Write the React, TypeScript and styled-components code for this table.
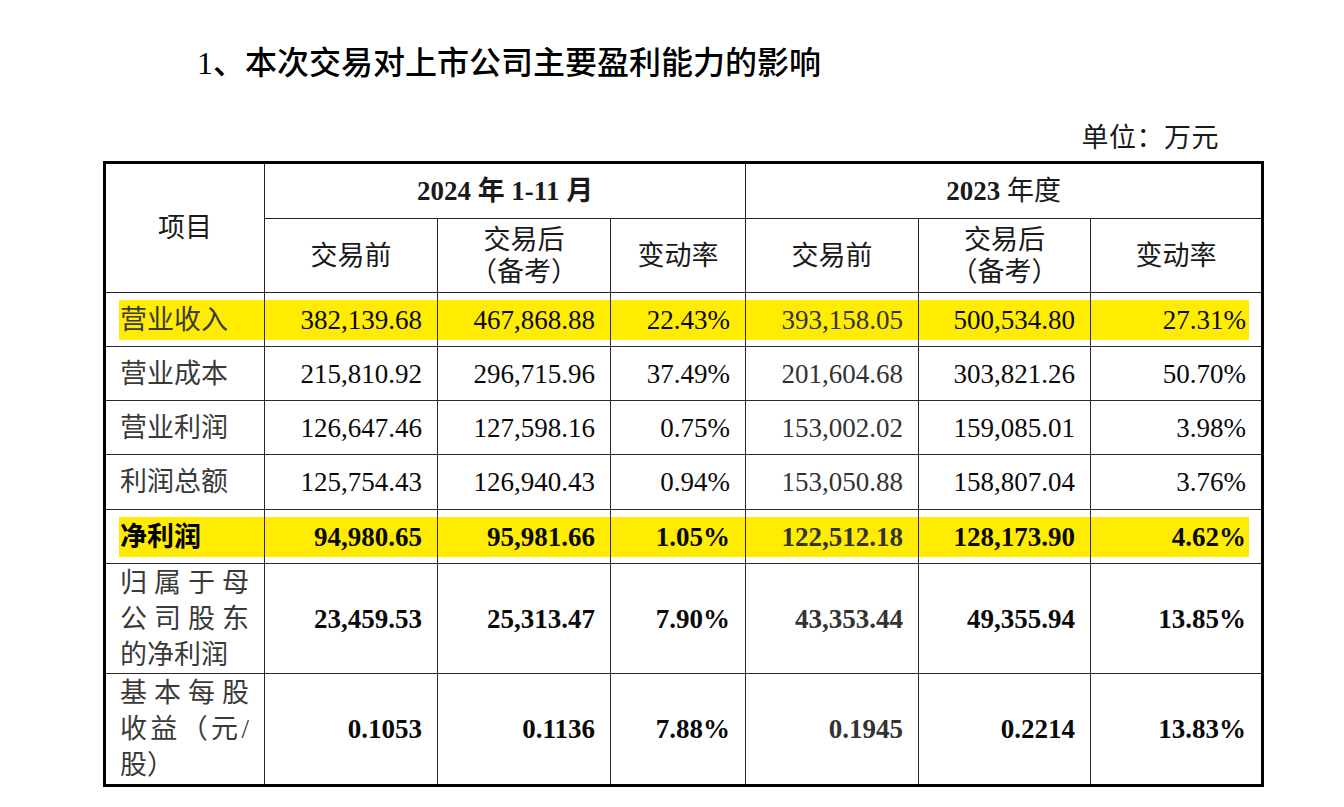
import React from 'react';
import styled, { createGlobalStyle, css } from 'styled-components';

const GlobalStyle = createGlobalStyle`
  html, body { margin: 0; padding: 0; background: #fff; }
  body {
    font-family: "Liberation Serif", "Noto Sans CJK SC", serif;
    color: #000;
    text-spacing-trim: space-all;
  }
`;

const Page = styled.div`
  width: 1344px;
  height: 807px;
  overflow: hidden;
  padding-left: 103px;
  box-sizing: border-box;
`;

const Sheet = styled.div`
  width: 1163px;
`;

const Title = styled.h1`
  margin: 43px 0 0 94px;
  font-size: 32px;
  line-height: 40px;
  font-weight: 500;
  color: #000;
`;

const Unit = styled.div`
  margin-top: 40px;
  padding-right: 47px;
  text-align: right;
  font-size: 27px;
  line-height: 30px;
  color: #1a1a1a;
  letter-spacing: 0.5px;
`;

const Table = styled.table`
  margin-top: 8px;
  width: 1161px;
  border-collapse: collapse;
  table-layout: fixed;
  border: 3px solid #000;
`;

const Row = styled.tr<{ $h: number }>`
  height: ${(p) => p.$h}px;
`;

const HeadCell = styled.th<{ $weight?: number }>`
  border: 1px solid #222;
  padding: 0 10px;
  font-size: 27px;
  line-height: 32px;
  font-weight: ${(p) => p.$weight ?? 400};
  color: #1a1a1a;
  text-align: center;
  vertical-align: middle;
`;

const Strong = styled.b`
  font-weight: 700;
`;

type Hl = 'first' | 'mid' | 'last' | undefined;

const highlight = (hl: Hl) => {
  if (!hl) return '';
  const size = hl === 'first' ? 'calc(100% - 13px) 40px' : hl === 'last' ? 'calc(100% - 12px) 40px' : '100% 40px';
  const pos = hl === 'first' ? 'right center' : hl === 'last' ? 'left center' : 'center';
  return css`
    background-image: linear-gradient(#ffec00, #ffec00);
    background-repeat: no-repeat;
    background-size: ${size};
    background-position: ${pos};
  `;
};

const LabelCell = styled.td<{ $bold?: boolean; $hl?: Hl }>`
  border: 1px solid #2a2a2a;
  padding: 0 15px 0 14px;
  font-size: 27px;
  line-height: 36px;
  text-align: justify;
  text-align-last: left;
  vertical-align: middle;
  font-weight: ${(p) => (p.$bold ? 700 : 400)};
  color: ${(p) => (p.$bold ? '#000' : '#3a3a3a')};
  ${(p) => highlight(p.$hl)}
`;

const NumCell = styled.td<{ $bold?: boolean; $hl?: Hl; $muted?: boolean }>`
  border: 1px solid #2a2a2a;
  padding: 0 15px 0 6px;
  font-size: 27px;
  line-height: 36px;
  text-align: right;
  vertical-align: middle;
  white-space: nowrap;
  font-weight: ${(p) => (p.$bold ? 700 : 400)};
  color: ${(p) => (p.$muted ? '#333' : '#0a0a0a')};
  ${(p) => highlight(p.$hl)}
`;

type DataRow = {
  label: string;
  vals: string[];
  hl?: boolean;
  boldLabel?: boolean;
  boldNums?: boolean;
  h: number;
};

const rows: DataRow[] = [
  { label: '营业收入', hl: true, h: 54, vals: ['382,139.68', '467,868.88', '22.43%', '393,158.05', '500,534.80', '27.31%'] },
  { label: '营业成本', h: 54, vals: ['215,810.92', '296,715.96', '37.49%', '201,604.68', '303,821.26', '50.70%'] },
  { label: '营业利润', h: 54, vals: ['126,647.46', '127,598.16', '0.75%', '153,002.02', '159,085.01', '3.98%'] },
  { label: '利润总额', h: 55, vals: ['125,754.43', '126,940.43', '0.94%', '153,050.88', '158,807.04', '3.76%'] },
  { label: '净利润', hl: true, boldLabel: true, boldNums: true, h: 54, vals: ['94,980.65', '95,981.66', '1.05%', '122,512.18', '128,173.90', '4.62%'] },
  { label: '归属于母公司股东的净利润', boldNums: true, h: 110, vals: ['23,459.53', '25,313.47', '7.90%', '43,353.44', '49,355.94', '13.85%'] },
  { label: '基本每股收益（元/股）', boldNums: true, h: 112, vals: ['0.1053', '0.1136', '7.88%', '0.1945', '0.2214', '13.83%'] },
];

const colWidths = [160, 173, 173, 135, 173, 172, 172];

export default function App() {
  return (
    <Page>
      <GlobalStyle />
      <Sheet>
        <Title>1、本次交易对上市公司主要盈利能力的影响</Title>
        <Unit>单位：万元</Unit>
        <Table>
          <colgroup>
            {colWidths.map((w, i) => (
              <col key={i} style={{ width: w }} />
            ))}
          </colgroup>
          <thead>
            <Row $h={56}>
              <HeadCell rowSpan={2}>项目</HeadCell>
              <HeadCell colSpan={3} $weight={700}>2024 年 1-11 月</HeadCell>
              <HeadCell colSpan={3}>
                <Strong>2023</Strong> 年度
              </HeadCell>
            </Row>
            <Row $h={74}>
              <HeadCell>交易前</HeadCell>
              <HeadCell>
                交易后
                <br />
                （备考）
              </HeadCell>
              <HeadCell>变动率</HeadCell>
              <HeadCell>交易前</HeadCell>
              <HeadCell>
                交易后
                <br />
                （备考）
              </HeadCell>
              <HeadCell>变动率</HeadCell>
            </Row>
          </thead>
          <tbody>
            {rows.map((r) => (
              <Row key={r.label} $h={r.h}>
                <LabelCell $bold={r.boldLabel} $hl={r.hl ? 'first' : undefined}>
                  {r.label}
                </LabelCell>
                {r.vals.map((v, i) => (
                  <NumCell
                    key={i}
                    $bold={r.boldNums}
                    $muted={i === 3}
                    $hl={r.hl ? (i === r.vals.length - 1 ? 'last' : 'mid') : undefined}
                  >
                    {v}
                  </NumCell>
                ))}
              </Row>
            ))}
          </tbody>
        </Table>
      </Sheet>
    </Page>
  );
}
